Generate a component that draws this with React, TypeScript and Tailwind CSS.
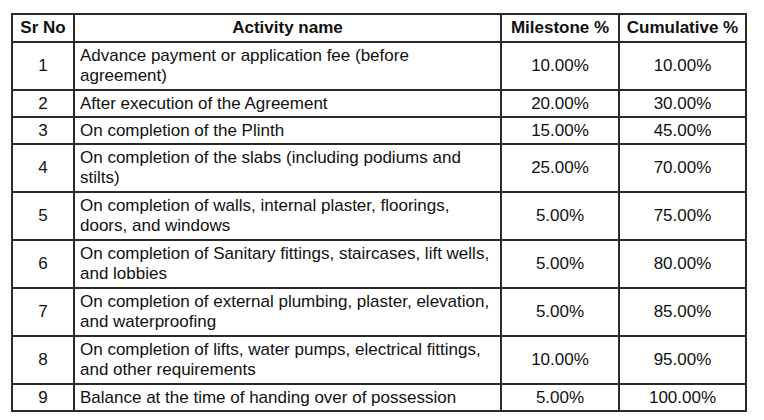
const rows: { n: number; lines: string[]; m: string; c: string }[] = [
  { n: 1, lines: ["Advance payment or application fee (before", "agreement)"], m: "10.00%", c: "10.00%" },
  { n: 2, lines: ["After execution of the Agreement"], m: "20.00%", c: "30.00%" },
  { n: 3, lines: ["On completion of the Plinth"], m: "15.00%", c: "45.00%" },
  { n: 4, lines: ["On completion of the slabs (including podiums and", "stilts)"], m: "25.00%", c: "70.00%" },
  { n: 5, lines: ["On completion of walls, internal plaster, floorings,", "doors, and windows"], m: "5.00%", c: "75.00%" },
  { n: 6, lines: ["On completion of Sanitary fittings, staircases, lift wells,", "and lobbies"], m: "5.00%", c: "80.00%" },
  { n: 7, lines: ["On completion of external plumbing, plaster, elevation,", "and waterproofing"], m: "5.00%", c: "85.00%" },
  { n: 8, lines: ["On completion of lifts, water pumps, electrical fittings,", "and other requirements"], m: "10.00%", c: "95.00%" },
  { n: 9, lines: ["Balance at the time of handing over of possession"], m: "5.00%", c: "100.00%" },
];

export default function App() {
  return (
    <div
      className="w-[764px] h-[420px] bg-white pl-[11px] pt-[13px] text-[#111] text-[17px] leading-[20px]"
      style={{ fontFamily: '"Liberation Sans", Arial, sans-serif' }}
    >
      <table className="w-[734px] table-fixed border-collapse border-2 border-[#2a2a2a]">
        <colgroup>
          <col className="w-[62px]" />
          <col className="w-[427px]" />
          <col className="w-[118px]" />
          <col className="w-[127px]" />
        </colgroup>
        <thead>
          <tr className="h-[28px] font-bold">
            <th className="border-2 border-[#2a2a2a] text-center">Sr No</th>
            <th className="border-2 border-[#2a2a2a] text-center">Activity name</th>
            <th className="border-2 border-[#2a2a2a] text-center">Milestone %</th>
            <th className="border-2 border-[#2a2a2a] text-center">Cumulative %</th>
          </tr>
        </thead>
        <tbody>
          {rows.map((r) => (
            <tr key={r.n} className={r.lines.length > 1 ? "h-[48px]" : "h-[27px]"}>
              <td className="border-2 border-[#2a2a2a] text-center">{r.n}</td>
              <td className="border-2 border-[#2a2a2a] pl-[5px] text-left">
                {r.lines.map((l) => (
                  <div key={l} className="whitespace-nowrap">
                    {l}
                  </div>
                ))}
              </td>
              <td className="border-2 border-[#2a2a2a] text-center">{r.m}</td>
              <td className="border-2 border-[#2a2a2a] text-center">{r.c}</td>
            </tr>
          ))}
        </tbody>
      </table>
    </div>
  );
}
